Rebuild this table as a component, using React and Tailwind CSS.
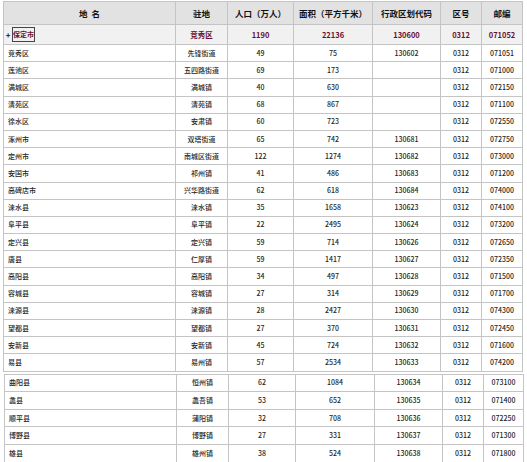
import React from "react";

const upper = [
  ["竞秀区", "先锋街道", "49", "75", "130602", "0312", "071051"],
  ["莲池区", "五四路街道", "69", "173", "", "0312", "071000"],
  ["满城区", "满城镇", "40", "630", "", "0312", "072150"],
  ["清苑区", "清苑镇", "68", "867", "", "0312", "071100"],
  ["徐水区", "安肃镇", "60", "723", "", "0312", "072550"],
  ["涿州市", "双塔街道", "65", "742", "130681", "0312", "072750"],
  ["定州市", "南城区街道", "122", "1274", "130682", "0312", "073000"],
  ["安国市", "祁州镇", "41", "486", "130683", "0312", "071200"],
  ["高碑店市", "兴华路街道", "62", "618", "130684", "0312", "074000"],
  ["涞水县", "涞水镇", "35", "1658", "130623", "0312", "074100"],
  ["阜平县", "阜平镇", "22", "2495", "130624", "0312", "073200"],
  ["定兴县", "定兴镇", "59", "714", "130626", "0312", "072650"],
  ["唐县", "仁厚镇", "59", "1417", "130627", "0312", "072350"],
  ["高阳县", "高阳镇", "34", "497", "130628", "0312", "071500"],
  ["容城县", "容城镇", "27", "314", "130629", "0312", "071700"],
  ["涞源县", "涞源镇", "28", "2427", "130630", "0312", "074300"],
  ["望都县", "望都镇", "27", "370", "130631", "0312", "072450"],
  ["安新县", "安新镇", "45", "724", "130632", "0312", "071600"],
  ["易县", "易州镇", "57", "2534", "130633", "0312", "074200"],
];

const lower = [
  ["曲阳县", "恒州镇", "62", "1084", "130634", "0312", "073100"],
  ["蠡县", "蠡吾镇", "53", "652", "130635", "0312", "071400"],
  ["顺平县", "蒲阳镇", "32", "708", "130636", "0312", "072250"],
  ["博野县", "博野镇", "27", "331", "130637", "0312", "071300"],
  ["雄县", "雄州镇", "38", "524", "130638", "0312", "071800"],
];

const font = { fontFamily: '"Noto Sans CJK SC", "Noto Sans", sans-serif' };

function Cols({ widths }) {
  return (
    <colgroup>
      {widths.map((w, i) => (
        <col key={i} style={{ width: w }} />
      ))}
    </colgroup>
  );
}

function DataRow({ r, h }) {
  return (
    <tr className={h}>
      <td className="border border-[#c4c4c4] pl-[4px] text-left">{r[0]}</td>
      {r.slice(1).map((c, i) => (
        <td key={i} className="border border-[#c4c4c4] text-center">
          {c}
        </td>
      ))}
    </tr>
  );
}

export default function App() {
  const headers = ["驻地", "人口（万人）", "面积（平方千米）", "行政区划代码", "区号", "邮编"];
  const top = ["竞秀区", "1190", "22136", "130600", "0312", "071052"];
  return (
    <div className="w-[527px] h-[462px] bg-white overflow-hidden text-[#262626] font-medium leading-none" style={font}>
      <div className="pl-[3px] pt-[1px]">
        <table className="border-collapse table-fixed w-[519px] text-[7px] border border-[#a8a8a8]">
          <Cols widths={[172, 52, 66, 79, 68, 41, 41]} />
          <thead>
            <tr className="h-[23px] bg-[#e2e2e2] text-[#111] font-bold text-[8.5px]">
              <th className="border border-[#c4c4c4] text-center font-bold">地&nbsp;&nbsp;名</th>
              {headers.map((h) => (
                <th key={h} className="border border-[#c4c4c4] text-center font-bold">
                  {h}
                </th>
              ))}
            </tr>
          </thead>
          <tbody>
            <tr className="h-[20px] bg-[#f1f1f1] text-[#6a1030] font-bold text-[7.5px]">
              <td className="border border-[#c4c4c4] pl-0 text-left">
                <div className="flex items-center">
                  <span className="text-[#111] text-[8px] w-[8px] text-center">+</span>
                  <span className="border border-[#444] px-0 py-[3px] text-[7px]">保定市</span>
                </div>
              </td>
              {top.map((c, i) => (
                <td key={i} className="border border-[#c4c4c4] text-center">
                  {c}
                </td>
              ))}
            </tr>
            {upper.map((r) => (
              <DataRow key={r[0]} r={r} h="h-[17.2px]" />
            ))}
          </tbody>
        </table>
      </div>
      <div className="pl-[4px] pt-[2px]">
        <table className="border-collapse table-fixed w-[519px] text-[7px] border border-[#a8a8a8]">
          <Cols widths={[172, 52, 67, 79, 68, 41, 40]} />
          <tbody>
            {lower.map((r) => (
              <DataRow key={r[0]} r={r} h="h-[17.6px]" />
            ))}
          </tbody>
        </table>
      </div>
    </div>
  );
}
